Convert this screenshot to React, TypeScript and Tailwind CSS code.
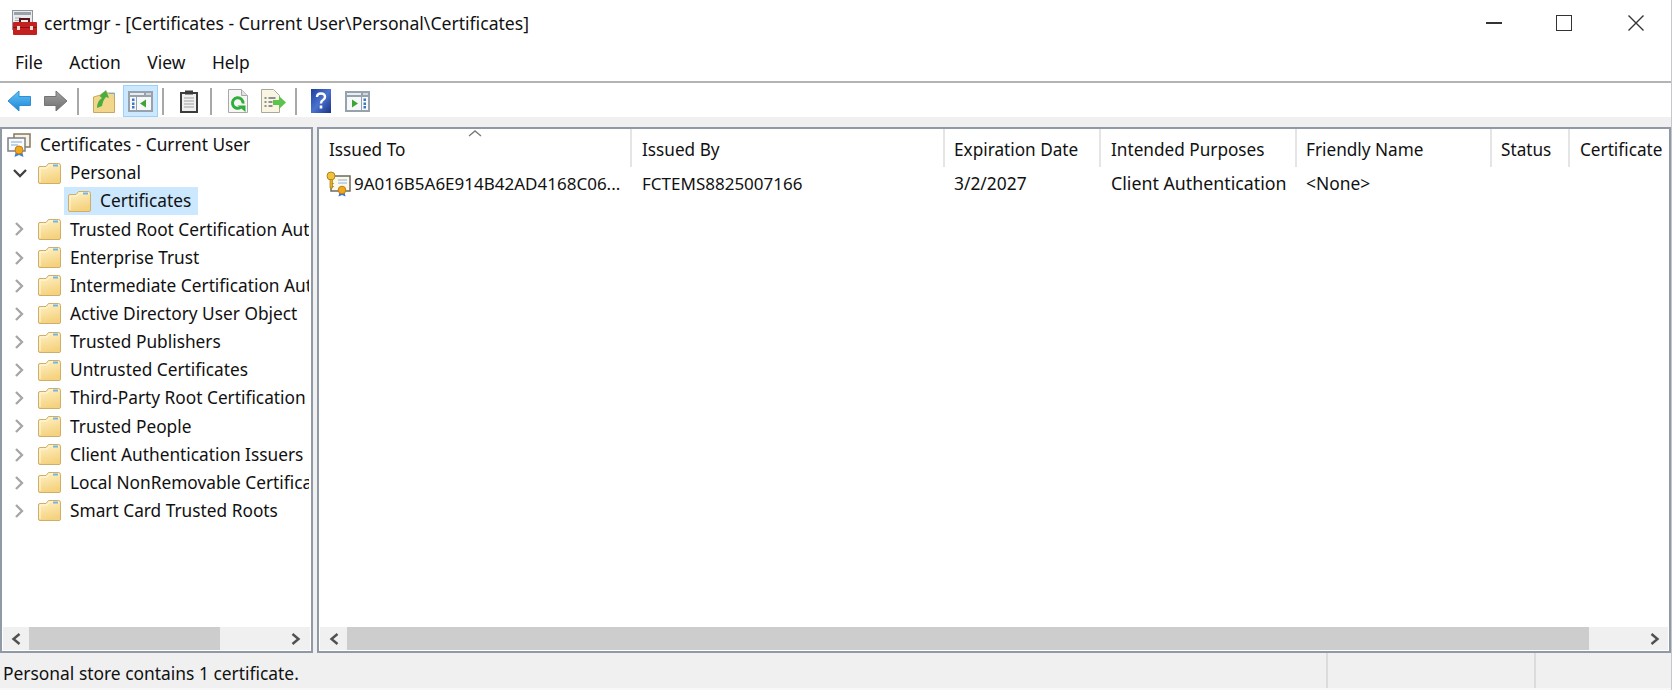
import React from "react";

const menus = ["File", "Action", "View", "Help"];

const stores = [
  "Trusted Root Certification Authorities",
  "Enterprise Trust",
  "Intermediate Certification Authorities",
  "Active Directory User Object",
  "Trusted Publishers",
  "Untrusted Certificates",
  "Third-Party Root Certification Authorities",
  "Trusted People",
  "Client Authentication Issuers",
  "Local NonRemovable Certificates",
  "Smart Card Trusted Roots",
];

const columns = [
  { label: "Issued To", width: "w-[313px] pl-[10px]" },
  { label: "Issued By", width: "w-[313px] pl-[10px]" },
  { label: "Expiration Date", width: "w-[156px] pl-[9px]" },
  { label: "Intended Purposes", width: "w-[196px] pl-[10px]" },
  { label: "Friendly Name", width: "w-[195px] pl-[9px]" },
  { label: "Status", width: "w-[78px] pl-[9px]" },
  { label: "Certificate", width: "w-[104px] pl-[10px]" },
];

const Folder = () => (
  <svg width="23" height="21" viewBox="0 0 23 21" className="shrink-0">
    <defs>
      <linearGradient id="folderFill" x1="0" y1="0" x2="0.300" y2="1">
        <stop offset="0" stopColor="#fff3c8" />
        <stop offset="1" stopColor="#f5d27f" />
      </linearGradient>
    </defs>
    <path d="M0.500 19V5q0-1.500 1.500-1.500h6l2.500-3h10q2 0 2 2V19q0 1.500-1.500 1.500H2q-1.500 0-1.500-1.500z" fill="url(#folderFill)" stroke="#cfae68" />
    <path d="M2 19V5h7l2.500-3H21" fill="none" stroke="#fff8dd" />
    <rect x="15" y="1.500" width="5" height="2" fill="#74b4e2" />
  </svg>
);

const Chevron = ({ open }: { open?: boolean }) => (
  <svg width="14" height="14" viewBox="0 0 14 14" className="shrink-0" fill="none">
    {open ? (
      <path d="M1 4l6 6 6-6" stroke="#404040" strokeWidth="2.300" />
    ) : (
      <path d="M3 1l6 6-6 6" stroke="#a6a6a6" strokeWidth="2.300" />
    )}
  </svg>
);

const ScrollArrow = ({ left }: { left?: boolean }) => (
  <svg width="12" height="14" viewBox="0 0 12 14" fill="none" className="shrink-0">
    <path d={left ? "M9.500 2L3.500 7l6 5" : "M2.500 2l6 5-6 5"} stroke="#505050" strokeWidth="2.400" />
  </svg>
);

const ArrowIcon = ({ right }: { right?: boolean }) => (
  <svg width="25" height="22" viewBox="0 0 25 22" className="shrink-0">
    <defs>
      <linearGradient id="backFill" x1="0" y1="0" x2="0" y2="1">
        <stop offset="0" stopColor="#62c4f6" />
        <stop offset="1" stopColor="#1f84d4" />
      </linearGradient>
      <linearGradient id="forwardFill" x1="0" y1="0" x2="0" y2="1">
        <stop offset="0" stopColor="#a2a2a2" />
        <stop offset="1" stopColor="#6e6e6e" />
      </linearGradient>
    </defs>
    {right ? (
      <path d="M1.500 6.500H13V1l11 10-11 10v-5.500H1.500z" fill="url(#forwardFill)" stroke="#747474" strokeLinejoin="round" />
    ) : (
      <path d="M23.500 6.500H12V1L1 11l11 10v-5.500h11.500z" fill="url(#backFill)" stroke="#2f8ed6" strokeLinejoin="round" />
    )}
  </svg>
);

const FolderUp = () => (
  <svg width="22" height="24" viewBox="0 0 22 24" className="shrink-0">
    <path d="M0.500 23.500V8l7-2 2-2h12v19.500z" fill="#f2d68c" stroke="#c9a85c" />
    <path d="M16 4.500h5.500V8" fill="none" stroke="#6fb0dc" />
    <path d="M4 19q0-7 5-10L6.500 7 13 1l3 8-3-1q-3 3-4 9z" fill="#4aae3e" />
  </svg>
);

const PaneIcon = ({ flip }: { flip?: boolean }) => (
  <svg width="25" height="21" viewBox="0 0 25 21" className="shrink-0">
    <rect width="25" height="21" fill="#98a2ac" />
    <rect x="2" y="2" width="14" height="2" fill="#e8edf2" />
    <rect x="18" y="2" width="5" height="2" fill="#d0d7de" />
    <rect x="2" y="6" width="21" height="13" fill="#f6f8fa" />
    {flip ? (
      <>
        <path d="M7 8.500l6 4-6 4z" fill="#3ea535" />
        <rect x="16" y="6" width="1" height="13" fill="#98a2ac" />
        <rect x="18.500" y="7.500" width="2.500" height="2.500" fill="#3d78c2" />
        <rect x="18.500" y="11.500" width="2.500" height="2.500" fill="#3d78c2" />
        <rect x="18.500" y="15" width="2.500" height="2.500" fill="#3d78c2" />
      </>
    ) : (
      <>
        <path d="M18 8.500l-6 4 6 4z" fill="#3ea535" />
        <rect x="8" y="6" width="1" height="13" fill="#98a2ac" />
        <rect x="4" y="7.500" width="2.500" height="2.500" fill="#3d78c2" />
        <rect x="4" y="11.500" width="2.500" height="2.500" fill="#3d78c2" />
        <rect x="4" y="15" width="2.500" height="2.500" fill="#3d78c2" />
      </>
    )}
  </svg>
);

const Clipboard = () => (
  <svg width="18" height="23" viewBox="0 0 18 23" className="shrink-0">
    <rect x="1" y="3" width="16" height="19" fill="#f0f0f0" stroke="#3c3c3c" strokeWidth="2" />
    <rect x="5" y="0.500" width="8" height="4" fill="#3c3c3c" />
    <path d="M4 8h10M4 11h10M4 14h10M4 17h10" stroke="#a0a0a0" />
  </svg>
);

const RefreshIcon = () => (
  <svg width="20" height="24" viewBox="0 0 20 24" className="shrink-0">
    <path d="M0.500 0.500h13l6 6v17H0.500z" fill="#f6f6f6" stroke="#a8a8a8" />
    <path d="M13.500 0.500v6h6" fill="#e0e0e0" stroke="#a8a8a8" />
    <path d="M12.500 18.500a5.300 5.300 0 1 1 2.500-4" fill="none" stroke="#2fae3a" strokeWidth="3" />
    <path d="M9.500 16.500h8v6.500z" fill="#2fae3a" />
  </svg>
);

const ExportIcon = () => (
  <svg width="25" height="24" viewBox="0 0 25 24" className="shrink-0">
    <path d="M0.500 0.500h12l6 6v17H0.500z" fill="#faf5e2" stroke="#aaa89a" />
    <path d="M3.500 9h2M7.500 9h7M3.500 13h2M7.500 13h4M3.500 17h2M7.500 17h4" stroke="#6a6f78" strokeWidth="1.500" />
    <path d="M12 11h6V7l7 6.500-7 6.500v-4h-6z" fill="#5cc44c" />
  </svg>
);

const HelpIcon = () => (
  <svg width="20" height="24" viewBox="0 0 20 24" className="shrink-0">
    <defs>
      <linearGradient id="helpFill" x1="0" y1="0" x2="1" y2="1">
        <stop offset="0" stopColor="#1d3f9a" />
        <stop offset="0.500" stopColor="#4a72cf" />
        <stop offset="1" stopColor="#1b3384" />
      </linearGradient>
    </defs>
    <rect width="20" height="24" fill="url(#helpFill)" />
    <path d="M6 8q0-3.500 4-3.500T14 8q0 2-2 3t-2 3.500" fill="none" stroke="#fff" strokeWidth="2.400" />
    <rect x="8.700" y="16.500" width="2.600" height="3" fill="#fff" />
  </svg>
);

const AppIcon = () => (
  <svg width="25" height="25" viewBox="0 0 25 25" className="shrink-0">
    <rect x="0.500" y="0.500" width="20" height="19" fill="#e9ebee" stroke="#8e949b" />
    <rect x="2" y="2" width="17" height="3" fill="#9aa1a8" />
    <path d="M3 8h6M3 10.500h6" stroke="#a9afb6" />
    <rect x="8" y="9" width="9" height="4" fill="none" stroke="#5c1515" strokeWidth="2" />
    <rect x="1" y="12" width="24" height="13" rx="1" fill="#c4201f" />
    <rect x="1" y="17" width="24" height="1" fill="#8b1212" />
    <rect x="5" y="16" width="3" height="4" fill="#e8e0d0" />
    <rect x="18" y="16" width="3" height="4" fill="#e8e0d0" />
  </svg>
);

const RootCertIcon = () => (
  <svg width="24" height="24" viewBox="0 0 24 24" className="shrink-0">
    <rect x="7" y="1" width="16" height="13" fill="#f7f3e6" stroke="#85775f" strokeWidth="1.500" />
    <rect x="1" y="5" width="17" height="13" fill="#fbfbfb" stroke="#7b7f88" strokeWidth="1.500" />
    <path d="M4 9h11M4 12h7" stroke="#7ea9d6" />
    <path d="M8.500 20l-1 4 4.500-2 4.500 2-1-4z" fill="#3f7fd0" />
    <circle cx="12" cy="17" r="4" fill="#f0a91f" stroke="#c47c12" />
  </svg>
);

const CertIcon = () => (
  <svg width="25" height="26" viewBox="0 0 25 26" className="shrink-0">
    <rect x="5" y="5" width="19" height="15" fill="#fbf9ee" stroke="#6f6a58" strokeWidth="1.500" />
    <path d="M12 9h9M12 12h9" stroke="#8fb0d4" />
    <circle cx="5" cy="5" r="4" fill="#f1c23c" stroke="#b5851c" />
    <path d="M4 8.500h2.500V17H4zM6 12.500h2M6 15.500h2" fill="#e3ae2a" stroke="#b5851c" strokeWidth="0.800" />
    <path d="M13.500 21l-1 4.500 3.500-1.500 3.500 1.500-1-4.500z" fill="#3177d6" />
    <circle cx="16" cy="19" r="3.800" fill="#efa91f" stroke="#c47c12" />
  </svg>
);

const Separator = ({ className }: { className: string }) => (
  <div className={`w-[2px] h-[27px] bg-[#a8a8a8] shrink-0 ${className}`} />
);

const Scrollbar = ({ arrow, thumb, rest }: { arrow: string; thumb: string; rest: string }) => (
  <div className="h-[23px] mx-[1px] mb-[1px] bg-[#f0f0f0] flex items-stretch shrink-0">
    <div className={`${arrow} flex items-center justify-center shrink-0`}>
      <ScrollArrow left />
    </div>
    <div className={`${thumb} bg-[#cdcdcd]`} />
    <div className={rest} />
    <div className="flex-1 flex items-center justify-center">
      <ScrollArrow />
    </div>
  </div>
);

export default function App() {
  return (
    <div
      className="w-[1672px] h-[690px] bg-white flex flex-col overflow-hidden text-[#111] text-[17.4px] border-r border-[#c4c8cc]"
      style={{ fontFamily: '"Noto Sans", "Open Sans", sans-serif' }}
    >
      {/* title bar */}
      <div className="h-[46px] flex items-center shrink-0">
        <div className="ml-[12px] mt-[-2px]">
          <AppIcon />
        </div>
        <span className="ml-[7px] whitespace-nowrap text-[17.6px]">certmgr - [Certificates - Current User\Personal\Certificates]</span>
        <div className="ml-auto flex items-center">
          <div className="w-[16px] h-[1.500px] bg-[#333] mr-[54px]" />
          <div className="w-[16px] h-[16px] border-[1.500px] border-[#333] mr-[56px]" />
          <svg width="16" height="16" viewBox="0 0 16 16" className="mr-[27px]">
            <path d="M0.500 0.500l15 15M15.500 0.500l-15 15" stroke="#333" strokeWidth="1.400" />
          </svg>
        </div>
      </div>

      {/* menu bar */}
      <div className="h-[37px] flex items-center pl-[15px] pb-[2px] gap-[26.500px] shrink-0 border-b-2 border-[#b4b4b4]">
        {menus.map((m) => (
          <span key={m}>{m}</span>
        ))}
      </div>

      {/* toolbar */}
      <div className="h-[34px] flex items-center shrink-0 pl-[7px] pt-[2px]">
        <ArrowIcon />
        <div className="ml-[11px]">
          <ArrowIcon right />
        </div>
        <Separator className="ml-[9px]" />
        <div className="ml-[14px]">
          <FolderUp />
        </div>
        <div className="ml-[8px] w-[35px] h-[32px] bg-[#cce8ff] border border-[#99d1ff] flex items-center justify-center shrink-0">
          <PaneIcon />
        </div>
        <Separator className="ml-[4px]" />
        <div className="ml-[16px]">
          <Clipboard />
        </div>
        <Separator className="ml-[12px]" />
        <div className="ml-[16px]">
          <RefreshIcon />
        </div>
        <div className="ml-[13px]">
          <ExportIcon />
        </div>
        <Separator className="ml-[9px]" />
        <div className="ml-[14px]">
          <HelpIcon />
        </div>
        <div className="ml-[14px]">
          <PaneIcon flip />
        </div>
      </div>

      {/* panes */}
      <div className="flex-1 min-h-0 bg-[#f0f0f0] pt-[10px] flex gap-[4px]">
        {/* tree */}
        <div className="w-[313px] shrink-0 bg-white border-2 border-[#8f9aa6] flex flex-col">
          <div className="flex-1 min-h-0 overflow-hidden whitespace-nowrap pt-[2px] pr-[2px] text-[17.3px]">
            <div className="h-[28.150px] flex items-center pl-[5px] gap-[9px]">
              <RootCertIcon />
              <span>Certificates - Current User</span>
            </div>
            <div className="h-[28.150px] flex items-center pl-[11px]">
              <Chevron open />
              <div className="ml-[11px] flex items-center gap-[9px]">
                <Folder />
                <span>Personal</span>
              </div>
            </div>
            <div className="h-[28.150px] flex items-center pl-[62px]">
              <div className="h-[28px] w-[134px] bg-[#cce8ff] flex items-center pl-[4px] gap-[9px]">
                <Folder />
                <span>Certificates</span>
              </div>
            </div>
            {stores.map((s) => (
              <div key={s} className="h-[28.150px] flex items-center pl-[11px] overflow-hidden">
                <Chevron />
                <div className="ml-[11px] flex items-center gap-[9px]">
                  <Folder />
                  <span>{s}</span>
                </div>
              </div>
            ))}
          </div>
          <Scrollbar arrow="w-[26px]" thumb="w-[191px]" rest="w-[62px]" />
        </div>

        {/* list */}
        <div className="flex-1 min-w-0 bg-white border-2 border-[#8f9aa6] flex flex-col">
          <div className="flex-1 min-h-0 overflow-hidden">
            <div className="relative h-[38px] flex whitespace-nowrap overflow-hidden text-[17.2px]">
              <svg width="14" height="7" viewBox="0 0 14 7" fill="none" className="absolute left-[149px] top-[1px]">
                <path d="M1 6l6-5 6 5" stroke="#7a7a7a" strokeWidth="1.400" />
              </svg>
              {columns.map((c, i) => (
                <div
                  key={c.label}
                  className={`${c.width} shrink-0 flex items-center pt-[4px] overflow-hidden ${i < columns.length - 1 ? "border-r-2 border-[#e5e5e5]" : ""}`}
                >
                  {c.label}
                </div>
              ))}
            </div>
            <div className="h-[33px] flex items-center whitespace-nowrap">
              <div className="w-[313px] shrink-0 pl-[7px] flex items-center text-[17px]">
                <CertIcon />
                <span className="ml-[3px]">9A016B5A6E914B42AD4168C06...</span>
              </div>
              <div className="w-[313px] shrink-0 pl-[10px] text-[17px]">FCTEMS8825007166</div>
              <div className="w-[156px] shrink-0 pl-[9px]">3/2/2027</div>
              <div className="w-[196px] shrink-0 pl-[10px] text-[17.8px]">Client Authentication</div>
              <div className="w-[195px] shrink-0 pl-[9px]">&lt;None&gt;</div>
            </div>
          </div>
          <Scrollbar arrow="w-[27px]" thumb="w-[1242px]" rest="w-[52px]" />
        </div>
      </div>

      {/* status bar */}
      <div className="h-[37px] bg-[#f0f0f0] flex items-center shrink-0 border-b-2 border-[#f8f8f8]">
        <div className="w-[1328px] pl-[3px] pt-[6px] h-full flex items-center border-r-2 border-[#dcdcdc] whitespace-nowrap">
          Personal store contains 1 certificate.
        </div>
        <div className="w-[208px] h-full border-r-2 border-[#dcdcdc]" />
      </div>
    </div>
  );
}
